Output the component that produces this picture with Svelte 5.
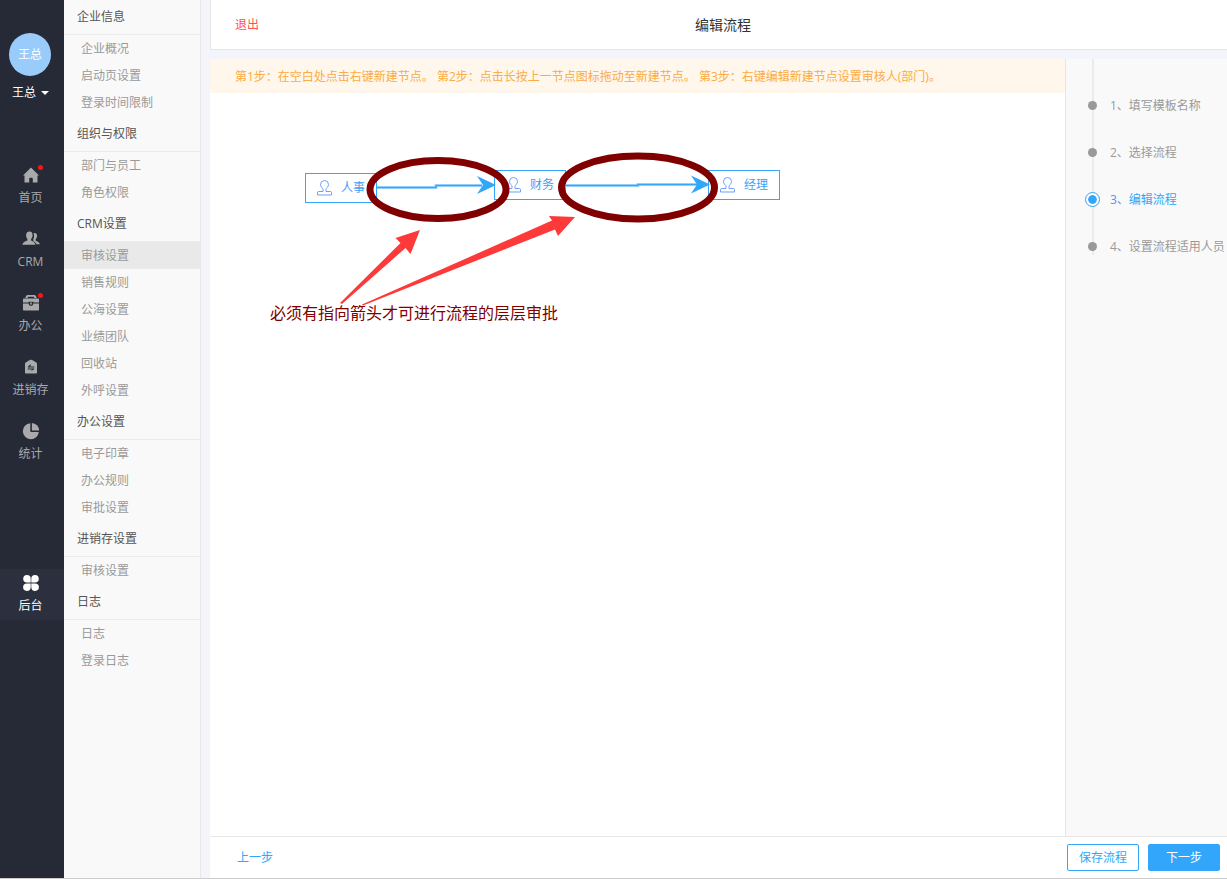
<script lang="ts">
  interface NavItem {
    icon: string;
    label: string;
    dot?: boolean;
  }

  const navItems: NavItem[] = [
    { icon: "home", label: "首页", dot: true },
    { icon: "crm", label: "CRM" },
    { icon: "office", label: "办公", dot: true },
    { icon: "stock", label: "进销存" },
    { icon: "stats", label: "统计" },
    { icon: "admin", label: "后台" },
  ];

  const menu = [
    { title: "企业信息", items: ["企业概况", "启动页设置", "登录时间限制"] },
    { title: "组织与权限", items: ["部门与员工", "角色权限"] },
    {
      title: "CRM设置",
      items: ["审核设置", "销售规则", "公海设置", "业绩团队", "回收站", "外呼设置"],
    },
    { title: "办公设置", items: ["电子印章", "办公规则", "审批设置"] },
    { title: "进销存设置", items: ["审核设置"] },
    { title: "日志", items: ["日志", "登录日志"] },
  ];

  const steps = ["填写模板名称", "选择流程", "编辑流程", "设置流程适用人员"];

  const nodes = [
    { label: "人事", x: 95, y: 80 },
    { label: "财务", x: 284, y: 77 },
    { label: "经理", x: 498, y: 77 },
  ];

  let activeNav = $state("admin");
  let activeMenu = $state("CRM设置/审核设置");
  let currentStep = $state(2);
</script>

<div class="app">
  <nav class="rail">
    <div class="avatar">王总</div>
    <button class="user" type="button">王总<span class="caret"></span></button>

    {#each navItems as item}
      <a
        href="#{item.icon}"
        class="nav-item"
        class:active={activeNav === item.icon}
        class:last={item.icon === "admin"}
        onclick={() => (activeNav = item.icon)}
      >
        <span class="nav-icon">
          <svg width="18" height="18" viewBox="0 0 18 18" fill="currentColor">
            {#if item.icon === "home"}
              <path d="M9 1.500 17 9.500h-1.500v7h-4.700v-3.800a1 1 0 0 0-1-1H8.200a1 1 0 0 0-1 1v3.800H2.500v-7H1z" />
            {:else if item.icon === "crm"}
              <path d="M11.500 3c2.200-.5 3.700.8 3.600 3-.1 1.400-.7 2.400-1.400 3.200v1.500c1.600.8 3.700 1.400 4.200 3.500h-3.400c-.5-1.500-1.700-2.300-3.200-3V9.200c1-1.800 1-4.400.2-6.200z" />
              <path d="M7.500 1.500c2.100 0 3.300 1.600 3.100 4-.1 1.500-.7 2.600-1.500 3.400v1.600c1.800 1 4 1.700 4.400 4.300H.4c.3-2.600 3-3.300 5-4.300V8.900C4.600 8.100 4.200 7 4.100 5.500 4 3.100 5.400 1.500 7.500 1.500z" />
            {:else if item.icon === "office"}
              <path d="M5.500 1h7c1 0 1.700.9 2.200 3H12.500l-.8-1.200H6.300L5.500 4H3.300C3.800 1.900 4.500 1 5.500 1zM2 4.600h14c.6 0 1 .4 1 1v3H11.400V7.800H6.600v.8H1v-3c0-.6.4-1 1-1zM1 9.400h5.700c.1 1.500 1 2.400 2.300 2.400s2.200-.9 2.300-2.400H17v6.100c0 .6-.4 1-1 1H2c-.6 0-1-.4-1-1z" />
              <path d="M8.200 8.600h1.600v1.300a.8.8 0 0 1-1.600 0z" />
            {:else if item.icon === "stock"}
              <path fill-rule="evenodd" d="M9 1.700c1 0 5.500 2.600 5.800 3.300.2.4.2 1 .2 2v7.500c0 .6-.4 1-1 1H4c-.6 0-1-.4-1-1V7c0-1 0-1.600.2-2C3.500 4.300 8 1.700 9 1.700zM8.500 6.300 5.800 8.700v.7H12.300V8.500H8l1-1.500zM5.700 10.600v.9h4.300L9 13l3.300-1.700v-.7z" />
            {:else if item.icon === "stats"}
              <path d="M8.300 1.200V9c0 .6.300.9.900.9h7.600A8 8 0 1 1 8.300 1.200z" />
              <path d="M9.900 1.100a7.600 7.600 0 0 1 7.200 7.300H10.500a.6.6 0 0 1-.6-.6z" />
            {:else}
              <path d="M5 1a3.700 3.700 0 0 1 3.700 3.700v3.900H5A3.800 3.800 0 0 1 5 1zM13 1a3.800 3.800 0 0 1 0 7.600H9.300V4.700A3.700 3.700 0 0 1 13 1zM5 9.400h3.700v3.900A3.800 3.800 0 1 1 5 9.400zM9.300 9.400H13a3.800 3.800 0 1 1-3.700 3.900z" />
            {/if}
          </svg>
          {#if item.dot}<i class="dot"></i>{/if}
        </span>
        {item.label}
      </a>
    {/each}
  </nav>

  <aside class="menu">
    {#each menu as group}
      <section>
        <h2>{group.title}</h2>
        <ul>
          {#each group.items as item}
            {@const key = `${group.title}/${item}`}
            <li>
              <a
                href="#{key}"
                class:selected={activeMenu === key}
                onclick={() => (activeMenu = key)}>{item}</a
              >
            </li>
          {/each}
        </ul>
      </section>
    {/each}
  </aside>

  <main>
    <header>
      <a href="#exit" class="exit">退出</a>
      <h1>编辑流程</h1>
    </header>

    <div class="editor">
      <div class="workspace">
        <p class="hint">
          第1步：在空白处点击右键新建节点。 第2步：点击长按上一节点图标拖动至新建节点。 第3步：右键编辑新建节点设置审核人(部门)。
        </p>

        <div class="canvas">
          {#each nodes as node}
            <div class="node" style:left="{node.x}px" style:top="{node.y}px">
              <svg width="15" height="16" viewBox="0 0 15 16" fill="none" stroke="#6f9ff8">
                <path d="M6 11.500V9.200C6 8.300 3.500 7 3.500 4.500a4 4 0 0 1 8 0C11.500 7 9 8.300 9 9.200v2.300h4.300c.8 0 1.200.4 1.200 1.200v2.300H.5v-2.300c0-.8.4-1.200 1.200-1.200z" />
              </svg>
              {node.label}
            </div>
          {/each}

          <svg class="links">
            <g fill="none" stroke="#b5dcfc" stroke-width="3">
              <path d="M167 94.500h59v-2h46" />
              <path d="M355 92.500h73v-1h62" />
            </g>
            <g fill="none" stroke="#31a6fa" stroke-width="1.500">
              <path d="M167 94.500h59v-2h46" />
              <path d="M355 92.500h73v-1h62" />
            </g>
            <g fill="#31a6fa">
              <path d="M286 92 267 83l6 9-6 9z" />
              <path d="M500 91.500 481 82.500l6 9-6 9z" />
            </g>
            <g fill="none" stroke="#800000" stroke-width="7">
              <ellipse cx="228" cy="96.500" rx="68" ry="29" />
              <ellipse cx="428" cy="94.500" rx="76.500" ry="31.500" />
            </g>
            <g fill="#fd3939">
              <path d="M130 210 190.500 150l-5-5 24.500-8-9.500 24-5-6-63.500 56z" />
              <path d="M152 211.500 342 127.500l-3-4.500 26 1-17 19-3-6.500-192 76z" />
            </g>
          </svg>

          <p class="note">必须有指向箭头才可进行流程的层层审批</p>
        </div>
      </div>

      <ol class="steps">
        {#each steps as step, i}
          <li class:current={i === currentStep}>
            <span class="mark"></span>{i + 1}、{step}
          </li>
        {/each}
      </ol>
    </div>

    <footer>
      <a href="#prev" class="prev">上一步</a>
      <button type="button">保存流程</button>
      <button type="button" class="primary">下一步</button>
    </footer>
  </main>
</div>

<style>
  :global(body) {
    margin: 0;
  }

  .app {
    display: flex;
    min-height: 100vh;
    box-sizing: border-box;
    border-bottom: 1px solid #ccc;
    background: #f4f5fa;
    color: #999;
    font-family: "Open Sans", "Noto Sans CJK SC", sans-serif;
    font-size: 12px;
    line-height: 18px;
    overflow: hidden;
  }

  a {
    color: inherit;
    text-decoration: none;
  }

  h1,
  h2,
  p,
  ul,
  ol {
    margin: 0;
    padding: 0;
    font-weight: 400;
    list-style: none;
  }

  button {
    font: inherit;
    cursor: pointer;
  }

  /* left rail */
  .rail {
    width: 64px;
    flex-shrink: 0;
    display: flex;
    flex-direction: column;
    background: #262936;
    color: #aaa;
  }

  .avatar {
    width: 42px;
    height: 43px;
    margin: 33px 0 0 9px;
    border-radius: 50%;
    background: #99ccfb;
    color: #fff;
    line-height: 44px;
    text-align: center;
  }

  .user {
    display: flex;
    align-items: center;
    gap: 5px;
    margin: 8px 0 59px 12px;
    padding: 0;
    border: 0;
    background: none;
    color: #fff;
  }

  .caret {
    border: 4px solid transparent;
    border-top-color: #fff;
    border-bottom: 0;
  }

  .nav-item {
    display: flex;
    flex-direction: column;
    align-items: center;
    height: 51px;
    margin-bottom: 13px;
    padding: 5px 3px 0 0;
    box-sizing: border-box;
    line-height: 28px;
  }

  .nav-item.last {
    margin-top: 88px;
  }

  .nav-item.active {
    background: #2c2f3e;
    color: #fff;
  }

  .nav-icon {
    position: relative;
    height: 18px;
    line-height: 0;
  }

  .dot {
    position: absolute;
    top: -1px;
    right: -3px;
    width: 5px;
    height: 5px;
    border-radius: 50%;
    background: #fb1515;
  }

  /* settings menu */
  .menu {
    width: 136px;
    flex-shrink: 0;
    border-right: 1px solid #e8e8e8;
    background: #f9f9f9;
  }

  .menu h2 {
    padding-left: 13px;
    border-bottom: 1px solid #ececec;
    color: #555;
    font-size: 12px;
    line-height: 35px;
  }

  .menu section:first-child h2 {
    line-height: 34px;
  }

  .menu a {
    display: block;
    padding-left: 17px;
    line-height: 27px;
  }

  .menu a.selected {
    background: #e9e9e9;
  }

  /* editor */
  main {
    flex: 1;
    min-width: 0;
    display: flex;
    flex-direction: column;
    margin-left: 9px;
  }

  header {
    display: grid;
    grid-template-columns: 1fr auto 1fr;
    align-items: center;
    height: 49px;
    margin-bottom: 9px;
    padding-left: 24px;
    border: solid #e6e6e6;
    border-width: 0 0 1px 1px;
    background: #fff;
  }

  .exit {
    color: #ff5050;
  }

  h1 {
    margin-right: 16px;
    color: #333;
    font-size: 14px;
  }

  .editor {
    flex: 1;
    display: flex;
  }

  .workspace {
    flex: 1;
    min-width: 0;
    display: flex;
    flex-direction: column;
    background: #fff;
  }

  .hint {
    padding: 2px 0 0 25px;
    background: #fff7eb;
    color: #fbab47;
    line-height: 32px;
    white-space: nowrap;
  }

  .canvas {
    position: relative;
    flex: 1;
  }

  .node {
    position: absolute;
    display: flex;
    align-items: center;
    gap: 9px;
    width: 72px;
    height: 30px;
    padding-left: 11px;
    box-sizing: border-box;
    border: 1px solid #31a6fa;
    background: #fff;
    color: #3f9ff8;
    white-space: nowrap;
  }

  .links {
    position: absolute;
    inset: 0;
    width: 100%;
    height: 100%;
  }

  .note {
    position: absolute;
    left: 60px;
    top: 208px;
    color: #800000;
    font-size: 16px;
    line-height: 24px;
    white-space: nowrap;
  }

  .steps {
    position: relative;
    width: 162px;
    flex-shrink: 0;
    padding-top: 23px;
    box-sizing: border-box;
    border-left: 1px solid #e6e6e6;
    background: #f9f9f9;
  }

  .steps::before {
    content: "";
    position: absolute;
    left: 26px;
    top: 0;
    width: 2px;
    height: 196px;
    background: #ebebeb;
  }

  .steps li {
    position: relative;
    display: flex;
    align-items: center;
    height: 47px;
    padding-left: 19px;
    white-space: nowrap;
  }

  .mark {
    width: 9px;
    height: 9px;
    margin: 0 13px 0 3px;
    border-radius: 50%;
    background: #999;
  }

  .steps .current {
    color: #31a6fa;
  }

  .current .mark {
    margin: 0 10px 0 0;
    padding: 2px;
    border: 1px solid #31a6fa;
    background: #31a6fa content-box;
    box-shadow: inset 0 0 0 2px #fff;
  }

  footer {
    display: flex;
    align-items: center;
    gap: 9px;
    height: 41px;
    padding: 0 7px 0 27px;
    border-top: 1px solid #e6e6e6;
    background: #fff;
  }

  .prev {
    margin-right: auto;
    color: #31a6fa;
  }

  footer button {
    width: 72px;
    height: 27px;
    padding: 0;
    border: 1px solid #31a6fa;
    border-radius: 2px;
    background: #fff;
    color: #31a6fa;
  }

  footer .primary {
    background: #31a6fa;
    color: #fff;
  }
</style>
